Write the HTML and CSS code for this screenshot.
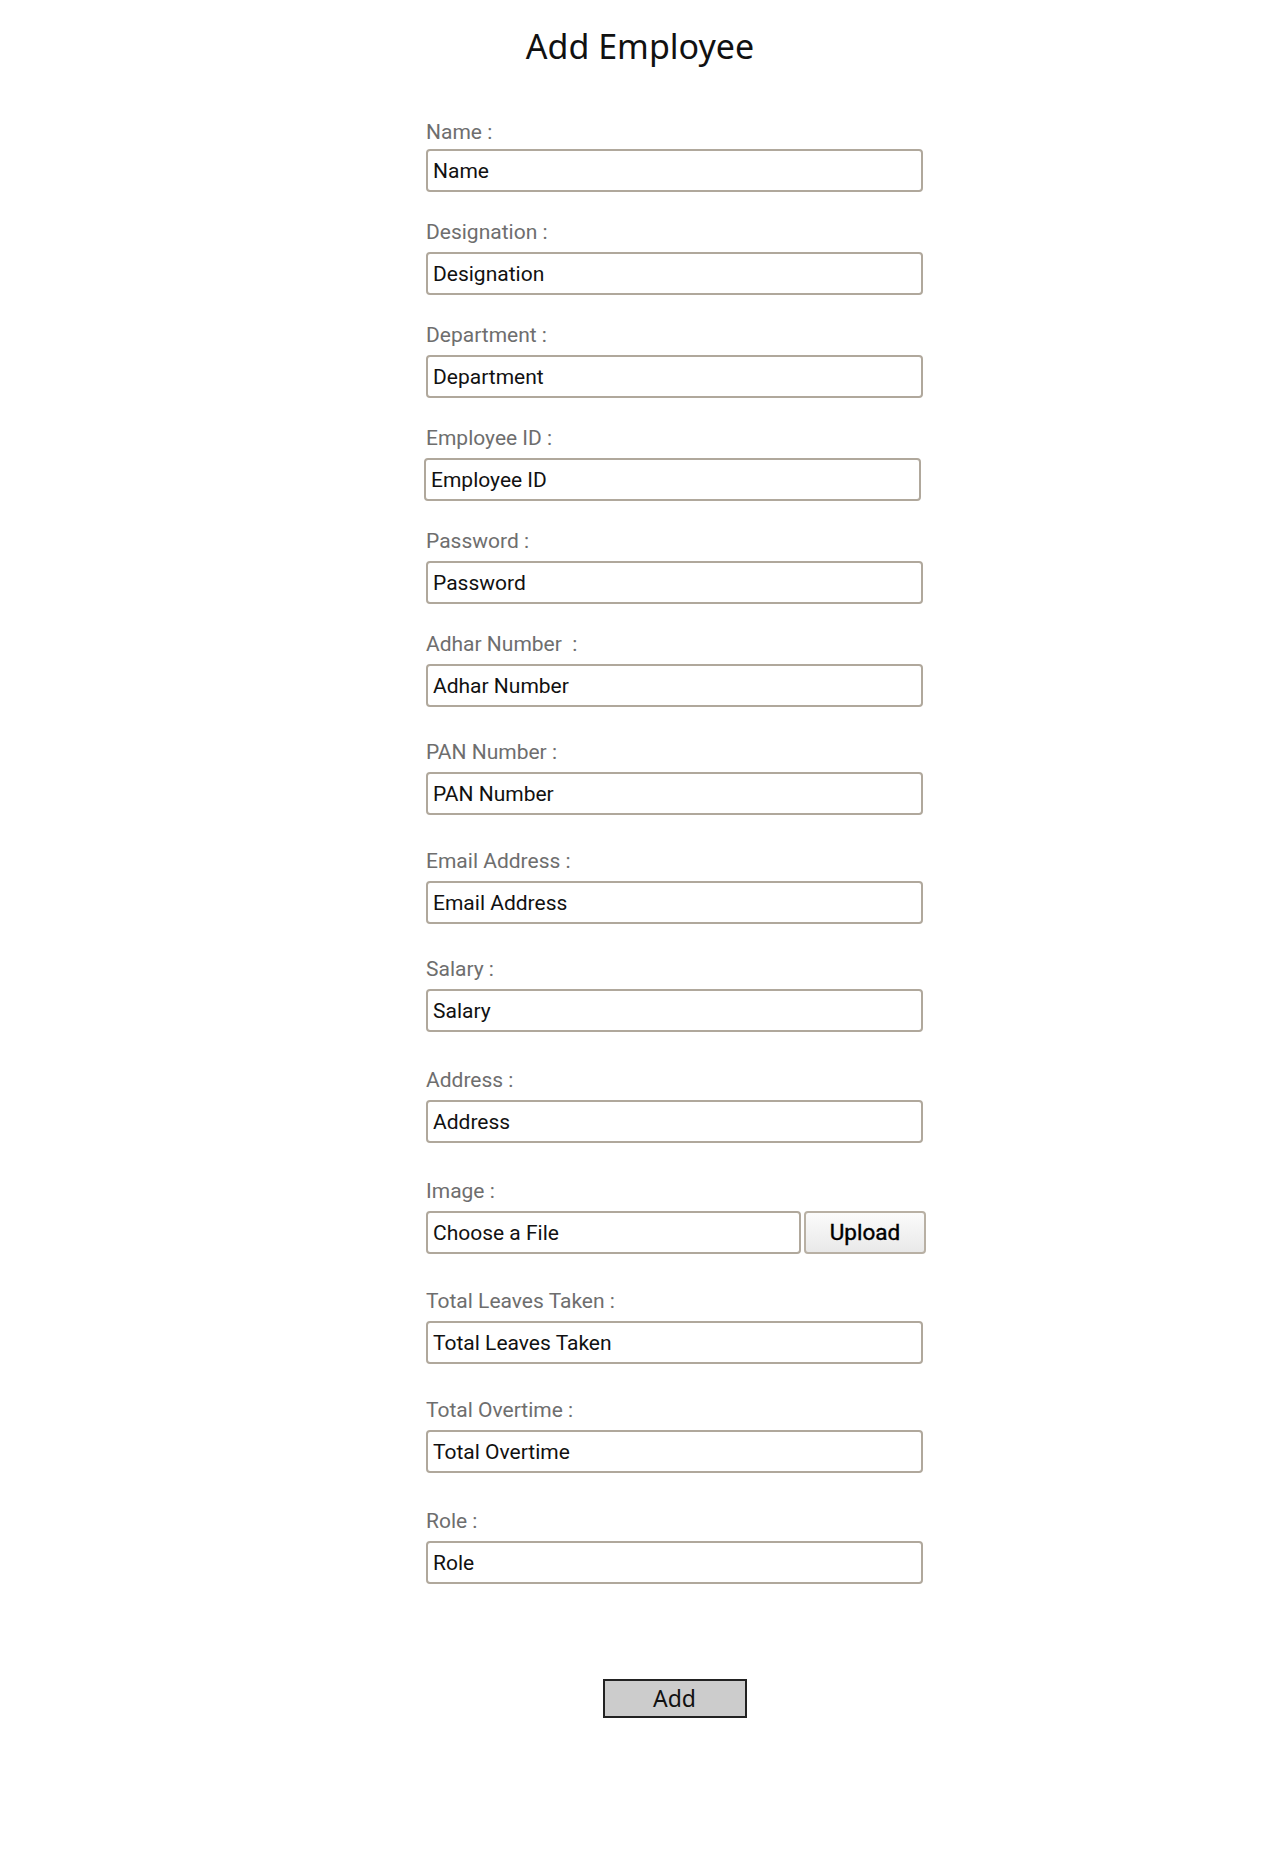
FILE: index.html
```html
<!DOCTYPE html>
<html lang="en">
<head>
<meta charset="utf-8">
<title>Add Employee</title>
<link rel="stylesheet" href="styles.css">
</head>
<body>
<h1 class="title">Add Employee</h1>
<form class="form">
  <div class="field field-first">
    <label class="label">Name :</label>
    <input class="input" type="text" placeholder="Name">
  </div>
  <div class="field">
    <label class="label">Designation :</label>
    <input class="input" type="text" placeholder="Designation">
  </div>
  <div class="field">
    <label class="label">Department :</label>
    <input class="input" type="text" placeholder="Department">
  </div>
  <div class="field">
    <label class="label">Employee ID :</label>
    <input class="input input-shift" type="text" placeholder="Employee ID">
  </div>
  <div class="field">
    <label class="label">Password :</label>
    <input class="input" type="text" placeholder="Password">
  </div>
  <div class="field gap-33">
    <label class="label">Adhar Number&nbsp; :</label>
    <input class="input" type="text" placeholder="Adhar Number">
  </div>
  <div class="field gap-34">
    <label class="label">PAN Number :</label>
    <input class="input" type="text" placeholder="PAN Number">
  </div>
  <div class="field gap-33">
    <label class="label">Email Address :</label>
    <input class="input" type="text" placeholder="Email Address">
  </div>
  <div class="field gap-36">
    <label class="label">Salary :</label>
    <input class="input" type="text" placeholder="Salary">
  </div>
  <div class="field gap-36">
    <label class="label">Address :</label>
    <input class="input" type="text" placeholder="Address">
  </div>
  <div class="field gap-35">
    <label class="label">Image :</label>
    <div class="file-row">
      <input class="input input-file" type="text" placeholder="Choose a File">
      <button class="upload" type="button">Upload</button>
    </div>
  </div>
  <div class="field gap-34">
    <label class="label">Total Leaves Taken :</label>
    <input class="input" type="text" placeholder="Total Leaves Taken">
  </div>
  <div class="field gap-36">
    <label class="label">Total Overtime :</label>
    <input class="input" type="text" placeholder="Total Overtime">
  </div>
  <div class="field field-last">
    <label class="label">Role :</label>
    <input class="input" type="text" placeholder="Role">
  </div>
  <div class="actions">
    <button class="add" type="button">Add</button>
  </div>
</form>
</body>
</html>
```
FILE: styles.css
```css
html, body {
  margin: 0;
  padding: 0;
  background: #ffffff;
}

body {
  font-family: Roboto, "Liberation Sans", sans-serif;
  color: #111;
}

.title {
  margin: 0;
  padding-top: 26px;
  font-family: "Noto Sans", "Open Sans", sans-serif;
  font-weight: 400;
  font-size: 34px;
  line-height: 40px;
  text-align: center;
  color: #111;
}

.form {
  width: 497px;
  margin: 54px 0 0 426px;
  display: flex;
  flex-direction: column;
}

.field {
  display: flex;
  flex-direction: column;
  margin-bottom: 28px;
}

.gap-33 { margin-bottom: 33px; }
.gap-34 { margin-bottom: 34px; }
.gap-35 { margin-bottom: 35px; }
.gap-36 { margin-bottom: 36px; }

.field-last {
  margin-bottom: 0;
}

.label {
  display: block;
  font-family: Roboto, "Liberation Sans", sans-serif;
  font-size: 21px;
  line-height: 24px;
  color: #6e6e6e;
  margin-bottom: 8px;
  white-space: pre;
}

.field-first .label {
  margin-bottom: 4.5px;
}

.input {
  box-sizing: border-box;
  width: 497px;
  height: 43px;
  margin: 0;
  padding: 2px 5px 0;
  border: 2px solid #b0a89c;
  border-radius: 4px;
  background: #fff;
  font-family: Roboto, "Liberation Sans", sans-serif;
  font-size: 21px;
  color: #111;
  outline: none;
}

.input::placeholder {
  color: #111;
  opacity: 1;
}

.input-shift {
  margin-left: -2px;
}

.file-row {
  display: flex;
  gap: 3px;
}

.input-file {
  flex-shrink: 0;
  width: 375px;
}

.upload {
  flex-shrink: 0;
  box-sizing: border-box;
  width: 122px;
  height: 43px;
  margin: 0;
  padding: 0;
  border: 2px solid #b8b0a4;
  border-radius: 4px;
  background: linear-gradient(#fbfbfb, #e9e9e9);
  font-family: Roboto, "Liberation Sans", sans-serif;
  font-size: 22.5px;
  font-weight: 400;
  -webkit-text-stroke: 0.4px #000;
  color: #000;
}

.actions {
  display: flex;
  justify-content: center;
  margin-top: 95px;
}

.add {
  box-sizing: border-box;
  width: 144px;
  height: 39px;
  margin: 0;
  padding: 0;
  border: 2px solid #222;
  background: #cccccc;
  font-family: "Noto Sans", "Open Sans", sans-serif;
  font-size: 23px;
  color: #111;
}
```
